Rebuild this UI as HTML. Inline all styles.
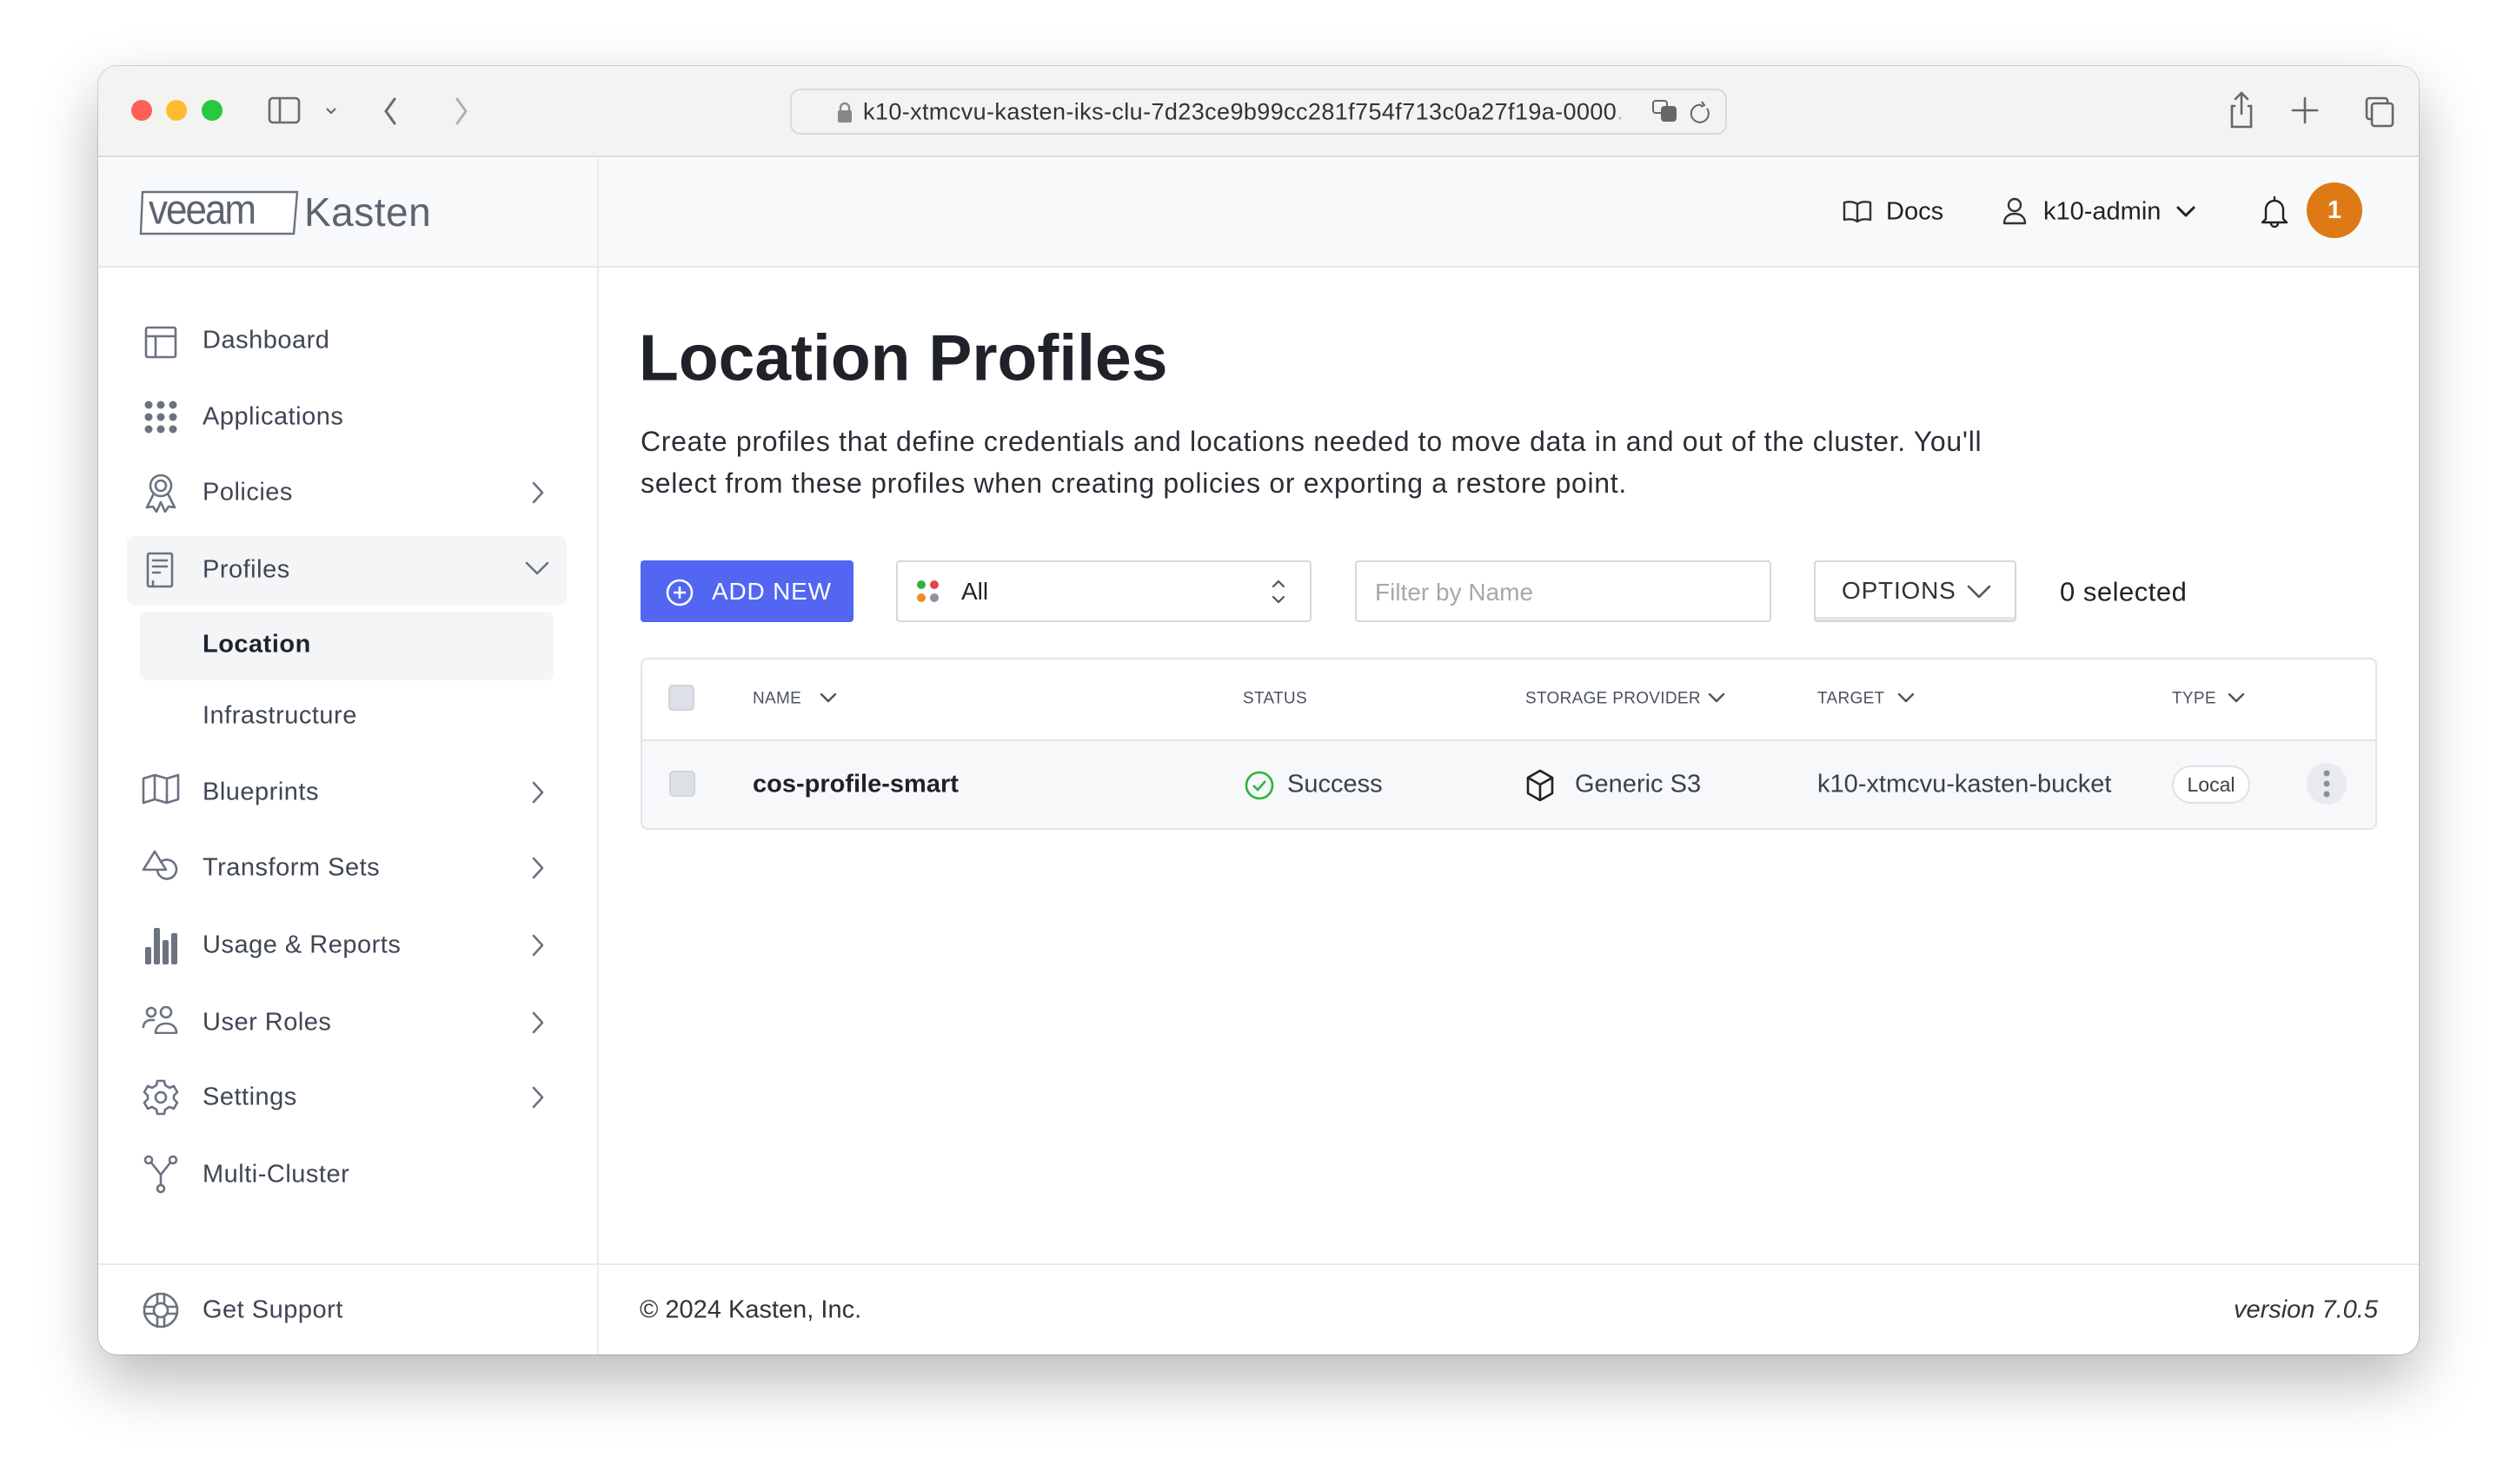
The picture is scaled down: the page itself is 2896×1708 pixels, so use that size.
<!DOCTYPE html>
<html><head><meta charset="utf-8">
<style>
*{margin:0;padding:0;box-sizing:border-box}
html,body{width:2896px;height:1708px;background:#fff;overflow:hidden;font-family:"Liberation Sans",sans-serif}
.win{position:absolute;left:113px;top:76px;width:2670px;height:1483px;border-radius:22px;overflow:hidden;background:#fff;box-shadow:0 30px 70px rgba(0,0,0,.28),0 0 0 1px rgba(0,0,0,.15)}
.a{position:absolute}
.t{position:absolute;white-space:nowrap;line-height:1;transform:translateY(-50%)}
.side{color:#3f4654;font-size:29px;letter-spacing:.5px}
svg.i{position:absolute;fill:none;stroke:#6b7280;stroke-width:2.6;stroke-linecap:round;stroke-linejoin:round}
</style></head><body>
<div class="win">
 <div class="a" style="left:0;top:0;width:2670px;height:105px;background:#f3f3f2;border-bottom:2px solid #dcdcdc"></div>
 <div class="a" style="left:38px;top:39px;width:24px;height:24px;border-radius:50%;background:#fe5f57"></div>
 <div class="a" style="left:78px;top:39px;width:24px;height:24px;border-radius:50%;background:#febc2e"></div>
 <div class="a" style="left:119px;top:39px;width:24px;height:24px;border-radius:50%;background:#28c840"></div>
 <svg class="a" style="left:195px;top:34px" width="80" height="36" viewBox="0 0 80 36" fill="none" stroke="#6b6b6b" stroke-width="2.6"><rect x="2" y="3" width="34" height="28" rx="4"/><line x1="14" y1="3" x2="14" y2="31"/><path d="M68 15l5 5 5-5" stroke-width="2.2"/></svg>
 <svg class="a" style="left:327px;top:32px" width="150" height="40" viewBox="0 0 150 40" fill="none" stroke-width="3" stroke-linecap="round"><path d="M14 6L4 20l10 14" stroke="#6b6b6b"/><path d="M86 6l10 14-10 14" stroke="#b0b0b0"/></svg>
 <div class="a" style="left:796px;top:26px;width:1078px;height:53px;border-radius:12px;border:2px solid #dadada;background:#f3f3f2"></div>
 <svg class="a" style="left:850px;top:40px" width="18" height="26" viewBox="0 0 18 26"><path d="M4 12V8a5 5 0 0 1 10 0v4" fill="none" stroke="#888" stroke-width="2.4"/><rect x="1" y="11" width="16" height="14" rx="2" fill="#888"/></svg>
 <div class="t" style="left:880px;top:53px;font-size:27px;color:#333;letter-spacing:.4px">k10-xtmcvu-kasten-iks-clu-7d23ce9b99cc281f754f713c0a27f19a-0000<span style="color:#bbb">.</span></div>
 <svg class="a" style="left:1787px;top:37px" width="80" height="32" viewBox="0 0 80 32" fill="none" stroke="#666" stroke-width="2"><rect x="2" y="3" width="16" height="14" rx="3"/><rect x="12" y="10" width="16" height="16" rx="3" fill="#666"/><path d="M58 8a10 10 0 1 0 6 4M58 4l3 4-4 2"/></svg>
 <svg class="a" style="left:2452px;top:27px" width="230" height="50" viewBox="0 0 230 50" fill="none" stroke="#666" stroke-width="2.6" stroke-linecap="round"><path d="M14 4v24M7 11l7-7 7 7M6 19H3v24h22V19h-3"/><path d="M87 10v28M73 24h28"/><rect x="158" y="10" width="24" height="24" rx="3"/><rect x="164" y="16" width="24" height="26" rx="3" fill="#f3f3f2"/></svg>

 <div class="a" style="left:0;top:106px;width:2670px;height:126px;background:#f8f9fb;border-bottom:2px solid #e5e7eb"></div>
 <div class="a" style="left:574px;top:106px;width:2px;height:1377px;background:#e8eaee"></div>
 <svg class="a" style="left:46px;top:139px" width="186" height="60" viewBox="0 0 186 60"><path d="M5 6h178l-4 48H3z" fill="#fff" stroke="#6b7280" stroke-width="2.4"/></svg>
 <div class="t" style="left:58px;top:166px;font-size:44px;color:#5d6470;letter-spacing:-2px;transform:translateY(-50%) scaleY(1.1)">veeam</div>
 <div class="t" style="left:237px;top:168px;font-size:46px;color:#5d6470;letter-spacing:.5px">Kasten</div>
 <svg class="i" style="left:2007px;top:153px;stroke:#333;stroke-width:2.4" width="34" height="30" viewBox="0 0 34 30"><path d="M17 6C13 3 7 3 2 4v20c5-1 11-1 15 2 4-3 10-3 15-2V4c-5-1-11-1-15 2zM17 6v20"/></svg>
 <div class="t" style="left:2057px;top:168px;font-size:29px;color:#222">Docs</div>
 <svg class="i" style="left:2190px;top:151px;stroke:#333;stroke-width:2.4" width="30" height="32" viewBox="0 0 30 32"><circle cx="15" cy="9" r="7"/><path d="M3 30c0-7 5-11 12-11s12 4 12 11z"/></svg>
 <div class="t" style="left:2238px;top:168px;font-size:29px;color:#222">k10-admin</div>
 <svg class="i" style="left:2390px;top:160px;stroke:#222;stroke-width:3" width="24" height="16" viewBox="0 0 24 16"><path d="M3 3l9 9 9-9"/></svg>
 <svg class="i" style="left:2487px;top:148px;stroke:#222;stroke-width:2.4" width="34" height="40" viewBox="0 0 34 40"><path d="M17 3v3M7 28V17a10 10 0 0 1 20 0v11l4 4H3z M13 33a4 4 0 0 0 8 0"/></svg>
 <div class="a" style="left:2541px;top:134px;width:64px;height:64px;border-radius:50%;background:#de7a15;color:#fff;font-size:29px;font-weight:bold;text-align:center;line-height:64px">1</div>

 <div class="a" style="left:33px;top:541px;width:506px;height:79px;border-radius:8px;background:#f4f5f7"></div>
 <div class="a" style="left:48px;top:628px;width:476px;height:79px;border-radius:8px;background:#f4f5f7"></div>

 <svg class="i" style="left:52px;top:298px" width="40" height="40" viewBox="0 0 40 40"><rect x="3" y="3" width="34" height="34" rx="2"/><path d="M3 13h34M14 13v24"/></svg>
 <div class="t side" style="left:120px;top:316px">Dashboard</div>
 <svg class="a" style="left:52px;top:384px" width="40" height="40" viewBox="0 0 40 40" fill="#6b7280"><circle cx="6" cy="6" r="4.5"/><circle cx="20" cy="6" r="4.5"/><circle cx="34" cy="6" r="4.5"/><circle cx="6" cy="20" r="4.5"/><circle cx="20" cy="20" r="4.5"/><circle cx="34" cy="20" r="4.5"/><circle cx="6" cy="34" r="4.5"/><circle cx="20" cy="34" r="4.5"/><circle cx="34" cy="34" r="4.5"/></svg>
 <div class="t side" style="left:120px;top:404px">Applications</div>
 <svg class="i" style="left:52px;top:468px" width="40" height="46" viewBox="0 0 40 46"><circle cx="20" cy="15" r="12"/><circle cx="20" cy="15" r="6"/><path d="M12 24L4 40l7-1 4 6 5-11M28 24l8 16-7-1-4 6-5-11"/></svg>
 <div class="t side" style="left:120px;top:491px">Policies</div>
 <svg class="i" style="left:54px;top:558px" width="34" height="44" viewBox="0 0 34 44"><rect x="3" y="3" width="28" height="38" rx="2"/><path d="M9 11h16M9 18h16M9 25h8M9 41v-6"/></svg>
 <div class="t side" style="left:120px;top:580px">Profiles</div>
 <div class="t side" style="left:120px;top:666px;font-weight:bold;color:#1f2430">Location</div>
 <div class="t side" style="left:120px;top:748px">Infrastructure</div>
 <svg class="i" style="left:50px;top:814px" width="44" height="36" viewBox="0 0 44 36"><path d="M2 6l13-4 14 4 13-4v28l-13 4-14-4-13 4zM15 2v28M29 6v28"/></svg>
 <div class="t side" style="left:120px;top:836px">Blueprints</div>
 <svg class="i" style="left:50px;top:901px" width="46" height="40" viewBox="0 0 46 40"><path d="M15 3L2 24h26zM18 24a11 11 0 1 0 4-9"/></svg>
 <div class="t side" style="left:120px;top:923px">Transform Sets</div>
 <svg class="a" style="left:52px;top:990px" width="40" height="44" viewBox="0 0 40 44" fill="#6b7280"><rect x="2" y="24" width="7" height="20" rx="2"/><rect x="12" y="2" width="7" height="42" rx="2"/><rect x="22" y="16" width="7" height="28" rx="2"/><rect x="32" y="8" width="7" height="36" rx="2"/></svg>
 <div class="t side" style="left:120px;top:1012px">Usage &amp; Reports</div>
 <svg class="i" style="left:50px;top:1082px" width="46" height="32" viewBox="0 0 46 32"><circle cx="11" cy="7" r="5"/><circle cx="28" cy="7" r="6"/><path d="M2 24c0-5 4-8 9-8h3M16 31c0-7 5-11 12-11s12 4 12 11z"/></svg>
 <div class="t side" style="left:120px;top:1101px">User Roles</div>
 <svg class="i" style="left:50px;top:1165px" width="44" height="44" viewBox="0 0 44 44"><circle cx="22" cy="22" r="6"/><path d="M18 3h8l1 5 5 3 5-2 4 7-4 4v4l4 4-4 7-5-2-5 3-1 5h-8l-1-5-5-3-5 2-4-7 4-4v-4l-4-4 4-7 5 2 5-3z"/></svg>
 <div class="t side" style="left:120px;top:1187px">Settings</div>
 <svg class="i" style="left:52px;top:1252px" width="40" height="46" viewBox="0 0 40 46"><circle cx="6" cy="7" r="4"/><circle cx="34" cy="7" r="4"/><circle cx="20" cy="40" r="4"/><path d="M9 10l11 14 11-14M20 24v12"/></svg>
 <div class="t side" style="left:120px;top:1276px">Multi-Cluster</div>

 <svg class="i" style="left:496px;top:476px" width="20" height="30" viewBox="0 0 20 30"><path d="M5 4l10 11-10 11"/></svg>
 <svg class="i" style="left:490px;top:568px" width="30" height="20" viewBox="0 0 30 20"><path d="M3 4l12 12 12-12"/></svg>
 <svg class="i" style="left:496px;top:821px" width="20" height="30" viewBox="0 0 20 30"><path d="M5 4l10 11-10 11"/></svg>
 <svg class="i" style="left:496px;top:908px" width="20" height="30" viewBox="0 0 20 30"><path d="M5 4l10 11-10 11"/></svg>
 <svg class="i" style="left:496px;top:997px" width="20" height="30" viewBox="0 0 20 30"><path d="M5 4l10 11-10 11"/></svg>
 <svg class="i" style="left:496px;top:1086px" width="20" height="30" viewBox="0 0 20 30"><path d="M5 4l10 11-10 11"/></svg>
 <svg class="i" style="left:496px;top:1172px" width="20" height="30" viewBox="0 0 20 30"><path d="M5 4l10 11-10 11"/></svg>

 <div class="a" style="left:0;top:1378px;width:2670px;height:2px;background:#e8eaee"></div>
 <svg class="i" style="left:50px;top:1410px" width="44" height="44" viewBox="0 0 44 44"><circle cx="22" cy="22" r="19"/><circle cx="22" cy="22" r="8"/><path d="M3 18h11M3 26h11M30 18h11M30 26h11M18 3v11M26 3v11M18 30v11M26 30v11"/></svg>
 <div class="t side" style="left:120px;top:1432px">Get Support</div>
 <div class="t" style="left:623px;top:1432px;font-size:29px;color:#333">© 2024 Kasten, Inc.</div>
 <div class="t" style="right:47px;top:1432px;font-size:29px;color:#333;font-style:italic">version 7.0.5</div>

 <div class="t" style="left:622px;top:336px;font-size:75px;font-weight:bold;color:#1f2228;letter-spacing:0">Location Profiles</div>
 <div class="t" style="left:624px;top:432px;font-size:32px;color:#2a2e35;letter-spacing:.7px">Create profiles that define credentials and locations needed to move data in and out of the cluster. You'll</div>
 <div class="t" style="left:624px;top:480px;font-size:32px;color:#2a2e35;letter-spacing:.7px">select from these profiles when creating policies or exporting a restore point.</div>

 <div class="a" style="left:624px;top:569px;width:245px;height:71px;border-radius:4px;background:#5266f2"></div>
 <svg class="a" style="left:652px;top:589px" width="34" height="34" viewBox="0 0 34 34" fill="none" stroke="#fff" stroke-width="2.6"><circle cx="17" cy="17" r="14"/><path d="M17 10v14M10 17h14"/></svg>
 <div class="t" style="left:706px;top:605px;font-size:28px;color:#fff;letter-spacing:.8px">ADD NEW</div>

 <div class="a" style="left:918px;top:569px;width:478px;height:71px;border-radius:4px;border:2px solid #d3d7de;background:#fff"></div>
 <svg class="a" style="left:940px;top:590px" width="30" height="30" viewBox="0 0 30 30"><circle cx="7" cy="7" r="5" fill="#2cb53d"/><circle cx="22" cy="7" r="5" fill="#e74545"/><circle cx="7" cy="22" r="5" fill="#f28c28"/><circle cx="22" cy="22" r="5" fill="#8d939c"/></svg>
 <div class="t" style="left:993px;top:605px;font-size:28px;color:#222">All</div>
 <svg class="i" style="left:1348px;top:588px;stroke:#555;stroke-width:2.2" width="20" height="34" viewBox="0 0 20 34"><path d="M4 11l6-6 6 6M4 23l6 6 6-6"/></svg>

 <div class="a" style="left:1446px;top:569px;width:479px;height:71px;border-radius:4px;border:2px solid #d3d7de;background:#fff"></div>
 <div class="t" style="left:1469px;top:606px;font-size:28px;color:#a4a9b1">Filter by Name</div>

 <div class="a" style="left:1974px;top:569px;width:233px;height:71px;border-radius:4px;border:2px solid #d3d7de;background:#fff;box-shadow:inset 0 -4px 0 #e5e7eb"></div>
 <div class="t" style="left:2006px;top:604px;font-size:28px;color:#333;letter-spacing:.8px">OPTIONS</div>
 <svg class="i" style="left:2149px;top:596px;stroke:#555;stroke-width:2.6" width="30" height="18" viewBox="0 0 30 18"><path d="M3 3l12 12 12-12"/></svg>
 <div class="t" style="left:2257px;top:605px;font-size:31px;color:#222;letter-spacing:.5px">0 selected</div>

 <div class="a" style="left:624px;top:681px;width:1998px;height:198px;border:2px solid #e1e4e9;border-radius:8px;background:#fff;overflow:hidden">
  <div class="a" style="left:0;top:92px;width:2000px;height:2px;background:#e1e4e9"></div>
  <div class="a" style="left:0;top:94px;width:2000px;height:110px;background:#f7f8fa"></div>
 </div>
 <div class="a" style="left:656px;top:712px;width:30px;height:30px;border-radius:5px;background:#dde0e6;border:2px solid #d0d4db"></div>
 <div class="a" style="left:657px;top:811px;width:30px;height:30px;border-radius:5px;background:#dde0e6;border:2px solid #d0d4db"></div>
 <div class="t" style="left:753px;top:728px;font-size:19px;color:#4b5260;letter-spacing:.3px">NAME</div>
 <svg class="i" style="left:829px;top:720px;stroke:#4b5260;stroke-width:2.4" width="22" height="14" viewBox="0 0 22 14"><path d="M3 3l8 8 8-8"/></svg>
 <div class="t" style="left:1317px;top:728px;font-size:19px;color:#4b5260;letter-spacing:.3px">STATUS</div>
 <div class="t" style="left:1642px;top:728px;font-size:19px;color:#4b5260;letter-spacing:.3px">STORAGE PROVIDER</div>
 <svg class="i" style="left:1851px;top:720px;stroke:#4b5260;stroke-width:2.4" width="22" height="14" viewBox="0 0 22 14"><path d="M3 3l8 8 8-8"/></svg>
 <div class="t" style="left:1978px;top:728px;font-size:19px;color:#4b5260;letter-spacing:.3px">TARGET</div>
 <svg class="i" style="left:2069px;top:720px;stroke:#4b5260;stroke-width:2.4" width="22" height="14" viewBox="0 0 22 14"><path d="M3 3l8 8 8-8"/></svg>
 <div class="t" style="left:2386px;top:728px;font-size:19px;color:#4b5260;letter-spacing:.3px">TYPE</div>
 <svg class="i" style="left:2449px;top:720px;stroke:#4b5260;stroke-width:2.4" width="22" height="14" viewBox="0 0 22 14"><path d="M3 3l8 8 8-8"/></svg>

 <div class="t" style="left:753px;top:827px;font-size:29px;color:#1f2228;font-weight:bold">cos-profile-smart</div>
 <svg class="a" style="left:1318px;top:810px" width="36" height="36" viewBox="0 0 36 36" fill="none" stroke="#2cb53d" stroke-width="2.6"><circle cx="18" cy="18" r="15"/><path d="M11 18l5 5 9-10"/></svg>
 <div class="t" style="left:1368px;top:827px;font-size:29px;color:#3a404b">Success</div>
 <svg class="a" style="left:1642px;top:808px" width="34" height="40" viewBox="0 0 34 40" fill="none" stroke="#222" stroke-width="2.6" stroke-linejoin="round"><path d="M17 3l14 8v18l-14 8-14-8V11zM3 11l14 8 14-8M17 19v18"/></svg>
 <div class="t" style="left:1699px;top:827px;font-size:29px;color:#3a404b">Generic S3</div>
 <div class="t" style="left:1978px;top:827px;font-size:29px;color:#3a404b">k10-xtmcvu-kasten-bucket</div>
 <div class="a" style="left:2386px;top:805px;width:90px;height:44px;border-radius:22px;border:2px solid #dde0e6;background:#fff;font-size:23px;color:#3a404b;text-align:center;line-height:40px">Local</div>
 <div class="a" style="left:2541px;top:802px;width:46px;height:48px;border-radius:50%;background:#e8eaee"></div>
 <svg class="a" style="left:2557px;top:808px" width="14" height="36" viewBox="0 0 14 36" fill="#8a909a"><circle cx="7" cy="6" r="3.5"/><circle cx="7" cy="18" r="3.5"/><circle cx="7" cy="30" r="3.5"/></svg>
</div>
</body></html>
